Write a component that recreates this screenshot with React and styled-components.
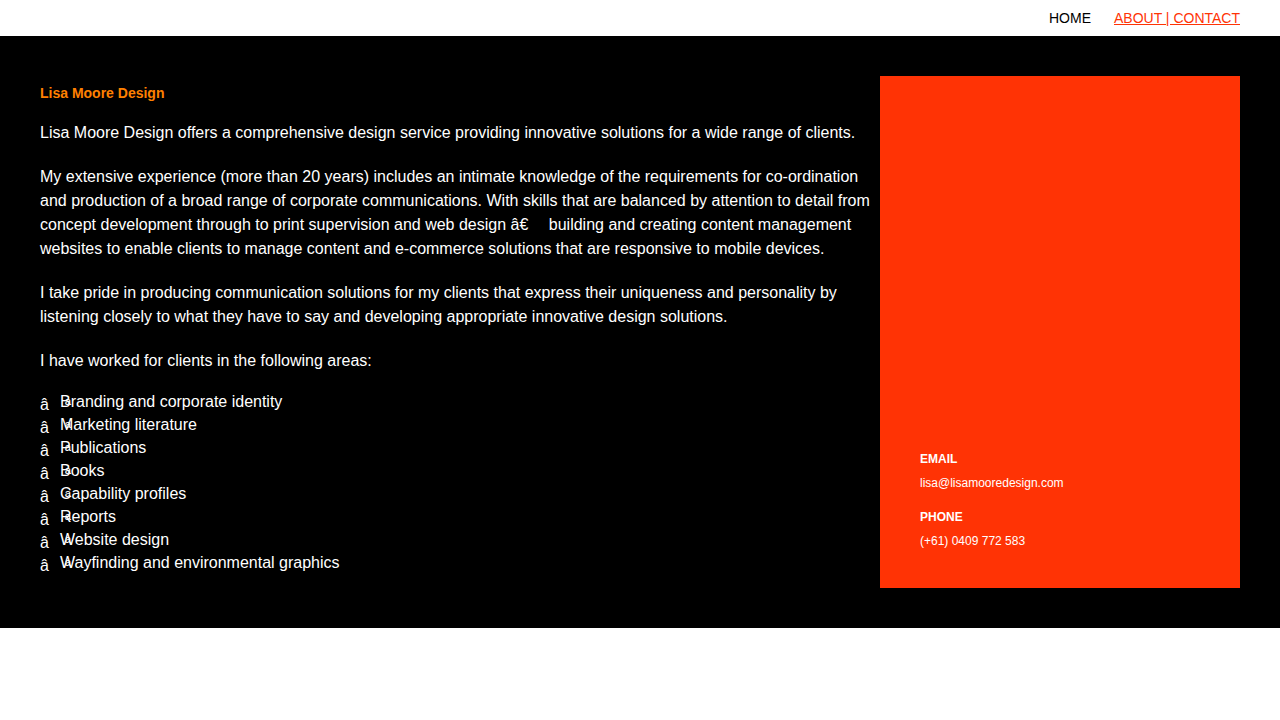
import React from "react";
import styled, { createGlobalStyle } from "styled-components";

const GlobalStyle = createGlobalStyle`
  * { box-sizing: border-box; }
  body {
    margin: 0;
    background: #fff;
    font-family: "Liberation Sans", Arial, sans-serif;
    font-size: 16px;
    line-height: 24px;
  }
`;

const Nav = styled.nav`
  display: flex;
  justify-content: flex-end;
  gap: 23px;
  padding: 6px 40px;
`;

const NavLink = styled.a`
  font-size: 14px;
  color: ${(p) => (p.$active ? "#ff3305" : "#000")};
  text-decoration: ${(p) => (p.$active ? "underline" : "none")};
`;

const Main = styled.main`
  display: grid;
  grid-template-columns: 7fr 3fr;
  padding: 40px;
  background: #000;
  color: #fff;
`;

const About = styled.section`
  padding: 5px 8px 14px 0;
`;

const Title = styled.h1`
  margin: 0 0 16px;
  font-size: 14px;
  line-height: 24px;
  color: #ff8000;
`;

const Paragraph = styled.p`
  margin: 0 0 20px;

  &:last-of-type {
    margin-bottom: 17px;
  }
`;

const Areas = styled.ul`
  margin: 0;
  padding: 0;
  list-style: none;
  line-height: 23px;
`;

const Area = styled.li`
  position: relative;
  padding-left: 20px;

  &::before {
    content: "${"\u00e2\u2003\u00aa"}";
    position: absolute;
    top: 3px;
    left: 0;
    white-space: nowrap;
  }
`;

const ContactPanel = styled.aside`
  display: flex;
  flex-direction: column;
  justify-content: flex-end;
  padding: 35px 40px;
  background: #ff3305;
`;

const ContactList = styled.dl`
  display: grid;
  gap: 10px;
  margin: 0;
  font-size: 12px;
`;

const Label = styled.dt`
  font-weight: bold;
`;

const Value = styled.dd`
  margin: 0;
`;

const ContactLink = styled.a`
  color: inherit;
  text-decoration: none;
`;

const areas = [
  "Branding and corporate identity",
  "Marketing literature",
  "Publications",
  "Books",
  "Capability profiles",
  "Reports",
  "Website design",
  "Wayfinding and environmental graphics",
];

export default function App() {
  return (
    <>
      <GlobalStyle />
      <Nav>
        <NavLink href="#home">HOME</NavLink>
        <NavLink href="#about" $active>ABOUT | CONTACT</NavLink>
      </Nav>
      <Main>
        <About>
          <Title>Lisa Moore Design</Title>
          <Paragraph>
            Lisa Moore Design offers a comprehensive design service providing
            innovative solutions for a wide range of clients.
          </Paragraph>
          <Paragraph>
            My extensive experience (more than 20 years) includes an intimate
            knowledge of the requirements for co-ordination and production of a
            broad range of corporate communications. With skills that are
            balanced by attention to detail from concept development through to
            print supervision and web design {"\u00e2\u20ac\u2003"} building and
            creating content management websites to enable clients to manage
            content and e-commerce solutions that are responsive to mobile
            devices.
          </Paragraph>
          <Paragraph>
            I take pride in producing communication solutions for my clients
            that express their uniqueness and personality by listening closely
            to what they have to say and developing appropriate innovative
            design solutions.
          </Paragraph>
          <Paragraph>I have worked for clients in the following areas:</Paragraph>
          <Areas>
            {areas.map((area) => (
              <Area key={area}>{area}</Area>
            ))}
          </Areas>
        </About>
        <ContactPanel>
          <ContactList>
            <div>
              <Label>EMAIL</Label>
              <Value>
                <ContactLink href="mailto:lisa@lisamooredesign.com">
                  lisa@lisamooredesign.com
                </ContactLink>
              </Value>
            </div>
            <div>
              <Label>PHONE</Label>
              <Value>(+61) 0409 772 583</Value>
            </div>
          </ContactList>
        </ContactPanel>
      </Main>
    </>
  );
}
